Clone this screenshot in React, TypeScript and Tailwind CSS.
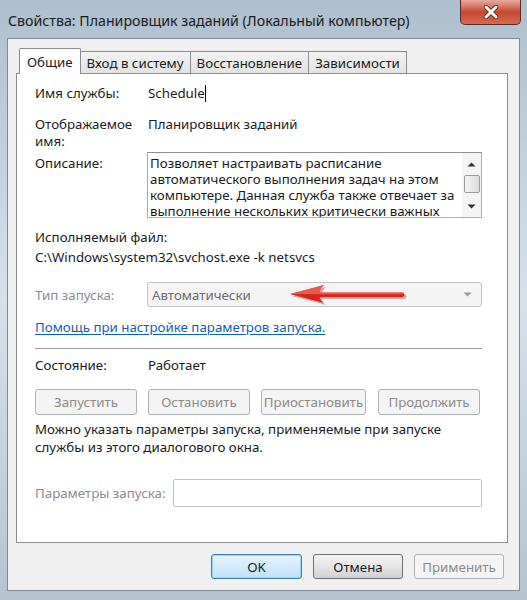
const disabledBtn =
  "h-[26px] rounded-[3px] border border-[#adb2b5] bg-[#f4f4f4] text-[#8b8b8b] flex items-center justify-center";

function TabButton({ label, active }: { label: string; active?: boolean }) {
  if (active) {
    return (
      <div className="relative z-10 -mb-px h-[26px] px-[7px] flex items-center bg-white border border-b-0 border-[#898c95] rounded-t-[2px]">
        {label}
      </div>
    );
  }
  return (
    <div className="h-[22px] px-[6px] flex items-center border border-b-0 border-l-0 border-[#898c95] bg-gradient-to-b from-[#f2f2f2] to-[#e3e3e3]">
      {label}
    </div>
  );
}

function Row({ label, children, className = "" }: { label: string; children: React.ReactNode; className?: string }) {
  return (
    <div className={"flex " + className}>
      <div className="w-[112px] shrink-0">{label}</div>
      <div className="flex-1 flex items-center">{children}</div>
    </div>
  );
}

export default function App() {
  return (
    <div className="w-[527px] h-[600px] overflow-hidden bg-gradient-to-b from-[#aebfcf] via-[#d7e1ea] to-[#b6c4cf] font-['Noto_Sans',sans-serif] text-[13.3px] leading-[18px] text-[#1b1b1b]">
      {/* title bar */}
      <div className="h-[38px] flex justify-between pl-[8px] pr-[6px]">
        <div className="pt-[11px] text-[14.2px] leading-[20px] text-[#1a1a1a]">
          Свойства: Планировщик заданий (Локальный компьютер)
        </div>
        <div className="w-[61px] h-[25px] rounded-b-[5px] border border-t-0 border-[#5a2a26] bg-gradient-to-b from-[#e6aca0] via-[#c4472f] to-[#d66a55] flex items-center justify-center">
          <svg width="16" height="14" viewBox="0 0 16 14">
            <path d="M3 2 L13 12 M13 2 L3 12" stroke="#4a1a14" strokeWidth="4.5" strokeLinecap="round" />
            <path d="M3 2 L13 12 M13 2 L3 12" stroke="#ffffff" strokeWidth="3" strokeLinecap="round" />
          </svg>
        </div>
      </div>

      {/* client area */}
      <div className="ml-[7px] w-[513px] h-[553px] border border-[#7f8a96] bg-[#f0f0f0]">
        <div className="pl-[8px] pr-[11px] pt-[9px]">
          {/* tabs */}
          <div className="h-[25px] flex items-end pl-[3px]">
            <TabButton label="Общие" active />
            <TabButton label="Вход в систему" />
            <TabButton label="Восстановление" />
            <TabButton label="Зависимости" />
          </div>

          {/* panel */}
          <div className="h-[470px] border border-[#898c95] bg-white pl-[18px] pr-[25px] pt-[10px] flex flex-col">
            <Row label="Имя службы:" className="h-[18px]">
              <span className="pl-px">Schedule</span>
              <span className="w-px h-[17px] bg-black" />
            </Row>

            <div className="mt-[14px] h-[34px] flex">
              <div className="w-[112px] shrink-0">
                <div className="h-[17px] leading-[17px]">Отображаемое</div>
                <div className="h-[17px] leading-[17px]">имя:</div>
              </div>
              <div className="pl-px leading-[17px]">Планировщик заданий</div>
            </div>

            <div className="mt-[2px] h-[66px] flex">
              <div className="w-[112px] shrink-0 pt-[2px]">Описание:</div>
              <div className="w-[338px] h-[66px] border border-[#abadb3] border-t-[#8e8f8f] flex overflow-hidden">
                <div className="flex-1 pl-[2px] pt-[2px] leading-[16px]">
                  <div>Позволяет настраивать расписание</div>
                  <div>автоматического выполнения задач на этом</div>
                  <div>компьютере. Данная служба также отвечает за</div>
                  <div>выполнение нескольких критически важных</div>
                </div>
                <div className="w-[19px] shrink-0 bg-[#f4f4f4] flex flex-col items-center">
                  <svg className="mt-[9px]" width="9" height="5" viewBox="0 0 9 5">
                    <path d="M0.5 4.5 L4.5 0.5 L8.5 4.5 Z" fill="#333" />
                  </svg>
                  <div className="mt-[8px] w-[16px] h-[18px] rounded-[2px] border border-[#9c9c9c] bg-gradient-to-r from-[#f5f5f5] to-[#dcdcdc]" />
                  <svg className="mt-[11px]" width="9" height="5" viewBox="0 0 9 5">
                    <path d="M0.5 0.5 L4.5 4.5 L8.5 0.5 Z" fill="#333" />
                  </svg>
                </div>
              </div>
            </div>

            <div className="mt-[10px] h-[18px]">Исполняемый файл:</div>
            <div className="mt-[2px] h-[18px]">C:\Windows\system32\svchost.exe -k netsvcs</div>

            <div className="mt-[16px] h-[25px] flex items-center">
              <div className="w-[112px] shrink-0 text-[#8d8d8d]">Тип запуска:</div>
              <div className="relative flex-1 h-[25px] rounded-[3px] border border-[#c3c3c3] bg-[#f4f4f4] flex items-center justify-between pl-[4px] pr-[9px] text-[#6b6b6b]">
                Автоматически
                <svg width="9" height="5" viewBox="0 0 9 5">
                  <path d="M0.5 0.5 L4.5 4.5 L8.5 0.5 Z" fill="#9a9a9a" />
                </svg>
                <svg className="absolute left-[140px] top-[1px]" width="120" height="22" viewBox="0 0 120 22">
                  <path d="M3 11 L37 2 Q32 7 33 9.5 L116 9.5 Q119 11.5 116 14 L33 14 Q32 16 37 20 Z" fill="#8a1a14" opacity="0.35" transform="translate(1 1)" />
                  <path d="M2 10 L36 1 Q31 6 32 8.5 L115 8.5 Q118 10.5 115 13 L32 13 Q31 15 36 19 Z" fill="#d8221a" />
                  <path d="M2 10 L36 1 Q31 6 32 8.5 L115 8.5 Q117 9.5 115 10.3 L32 10.3 Z" fill="#f3705f" opacity="0.7" />
                </svg>
              </div>
            </div>

            <div className="mt-[11px] h-[18px] text-[#0b63b6] underline underline-offset-2">
              Помощь при настройке параметров запуска.
            </div>

            <div className="mt-[12px] border-t border-b border-t-[#a0a0a0] border-b-white" />

            <Row label="Состояние:" className="mt-[6px] h-[18px]">
              <span className="pl-px">Работает</span>
            </Row>

            <div className="mt-[15px] flex gap-[11px]">
              <div className={disabledBtn + " w-[102px]"}>Запустить</div>
              <div className={disabledBtn + " w-[102px]"}>Остановить</div>
              <div className={disabledBtn + " w-[105px]"}>Приостановить</div>
              <div className={disabledBtn + " w-[102px] ml-px"}>Продолжить</div>
            </div>

            <div className="mt-[5px] h-[36px]">
              Можно указать параметры запуска, применяемые при запуске
              <br />
              службы из этого диалогового окна.
            </div>

            <div className="mt-[23px] h-[28px] flex items-center justify-between">
              <div className="text-[#8d8d8d]">Параметры запуска:</div>
              <div className="w-[309px] h-[28px] border border-[#c3c3c3] rounded-[2px] bg-white" />
            </div>
          </div>
        </div>

        {/* dialog buttons */}
        <div className="mt-[11px] flex justify-end gap-[11px] pr-[15px]">
          <div className="w-[91px] h-[25px] rounded-[3px] border border-[#3c7fb1] bg-gradient-to-b from-[#e6f4fc] to-[#bfe2f7] shadow-[inset_0_0_0_1px_#9fd6f5] flex items-center justify-center">
            OK
          </div>
          <div className="w-[90px] h-[25px] rounded-[3px] border border-[#707070] bg-gradient-to-b from-[#f3f3f3] via-[#e6e6e6] to-[#d0d0d0] flex items-center justify-center">
            Отмена
          </div>
          <div className="w-[90px] h-[25px] rounded-[3px] border border-[#adb2b5] bg-[#f4f4f4] text-[#8b8b8b] flex items-center justify-center">
            Применить
          </div>
        </div>
      </div>
    </div>
  );
}
